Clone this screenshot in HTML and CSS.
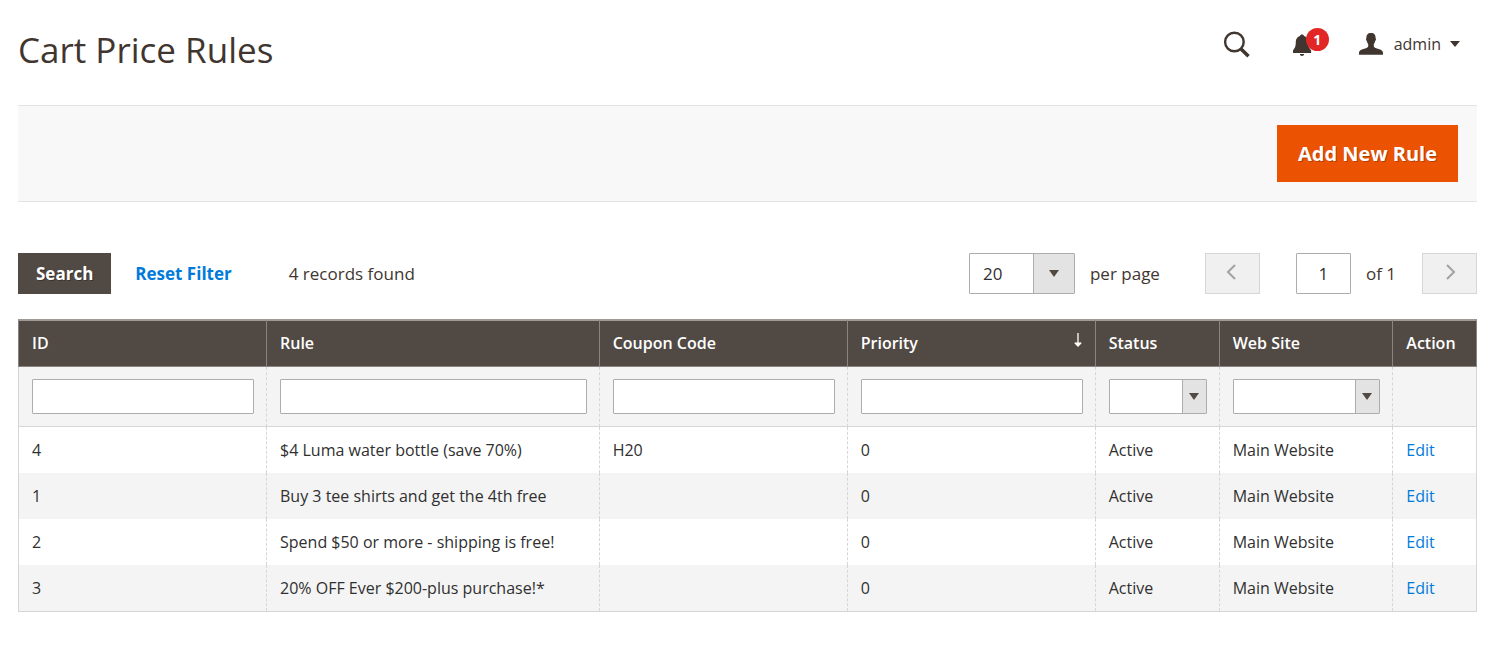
FILE: index.html
```
<!DOCTYPE html>
<html lang="en">
<head>
<meta charset="utf-8">
<meta name="viewport" content="width=device-width, initial-scale=1">
<title>Cart Price Rules</title>
<link rel="stylesheet" href="styles.css">
</head>
<body>
<header class="page-header">
  <h1 class="page-title">Cart Price Rules</h1>
  <div class="header-tools">
    <button class="icon-button" type="button" aria-label="Search">
      <svg width="28" height="28" viewBox="0 0 28 28" fill="none" stroke="currentColor"><circle cx="11.4" cy="11" r="9.3" stroke-width="2.4"/><path d="M17.5 17.5 25.5 25.2" stroke-width="3.6"/></svg>
    </button>
    <button class="icon-button notifications" type="button" aria-label="Notifications">
      <svg width="20" height="22" viewBox="0 0 20 22" fill="currentColor"><path d="M10 0.5c1.1 0 1.8.6 2 1.4 2.800.8 4.100 3 4.200 5.600.1 5 .8 6.500 2.900 8.700V19H1v-2.800c2.100-2.200 2.700-3.700 2.800-8.700.1-2.600 1.400-4.800 4.200-5.600.2-.8.9-1.400 2-1.400ZM7.800 20h4.400c-.2 1.200-1 1.900-2.200 1.900S8 21.200 7.800 20Z"/></svg>
      <span class="badge">1</span>
    </button>
    <button class="account" type="button">
      <svg width="24" height="22" viewBox="0 0 24 22" fill="currentColor"><path d="M12 0c3.400 0 4.700 2 4.600 5.200.7.300.5 2-.4 2.800-.3 1.400-.8 2.300-1.400 3v2.300c.2 1 1.200 1.500 3 2.100 3.200.9 6.200 1.600 6.200 4.600v1.200c0 .4-.2.600-.6.600H.6c-.4 0-.6-.2-.6-.6V20c0-3 3-3.700 6.200-4.600 1.800-.6 2.800-1.100 3-2.100V11c-.6-.7-1.100-1.600-1.400-3-.9-.8-1.100-2.500-.4-2.800C7.300 2 8.600 0 12 0Z"/></svg>
      <span>admin</span>
      <svg class="account-arrow" width="10" height="6" viewBox="0 0 10 6" fill="currentColor"><path d="M0 0h10L5 6Z"/></svg>
    </button>
  </div>
</header>

<main>
  <div class="page-actions">
    <button class="button-primary" type="button">Add New Rule</button>
  </div>

  <form class="grid-form">
    <div class="toolbar">
      <button class="button-search" type="button">Search</button>
      <button class="button-reset" type="button">Reset Filter</button>
      <span class="records">4 records found</span>
      <div class="per-page">
        <span class="select-box select-large">
          <select id="page-limit"><option>20</option><option>30</option><option>50</option></select>
          <svg width="10" height="7" viewBox="0 0 10 7" fill="currentColor"><path d="M0 0h10L5 7Z"/></svg>
        </span>
        <label for="page-limit">per page</label>
      </div>
      <div class="pager">
        <button class="page-button" type="button" aria-label="Previous page" disabled>
          <svg width="10" height="16" viewBox="0 0 10 16" fill="none" stroke="currentColor" stroke-width="2"><path d="M9 1 2 8l7 7"/></svg>
        </button>
        <div class="page-current">
          <input id="page-number" type="text" value="1">
          <label for="page-number">of 1</label>
        </div>
        <button class="page-button page-next" type="button" aria-label="Next page" disabled>
          <svg width="10" height="16" viewBox="0 0 10 16" fill="none" stroke="currentColor" stroke-width="2"><path d="m1 1 7 7-7 7"/></svg>
        </button>
      </div>
    </div>

    <table class="grid">
      <colgroup>
        <col class="col-wide"><col class="col-rule"><col class="col-wide"><col class="col-wide"><col class="col-status"><col class="col-site"><col>
      </colgroup>
      <thead>
        <tr class="headings">
          <th scope="col">ID</th>
          <th scope="col">Rule</th>
          <th scope="col">Coupon Code</th>
          <th scope="col"><span class="sorted">Priority <svg width="8" height="16" viewBox="0 0 8 16" fill="none" stroke="currentColor"><path d="M4 1v12" stroke-width="1.300"/><path d="M1 10.500 4 14l3-3.500Z" fill="currentColor" stroke="none"/><path d="M.8 10.800 4 14l3.200-3.200" stroke-width="1.300"/></svg></span></th>
          <th scope="col">Status</th>
          <th scope="col">Web Site</th>
          <th scope="col">Action</th>
        </tr>
        <tr class="filters">
          <td><input type="text" aria-label="ID"></td>
          <td><input type="text" aria-label="Rule"></td>
          <td><input type="text" aria-label="Coupon Code"></td>
          <td><input type="text" aria-label="Priority"></td>
          <td><span class="select-box"><select aria-label="Status"><option></option><option>Active</option><option>Inactive</option></select><svg width="10" height="7" viewBox="0 0 10 7" fill="currentColor"><path d="M0 0h10L5 7Z"/></svg></span></td>
          <td><span class="select-box"><select aria-label="Web Site"><option></option><option>Main Website</option></select><svg width="10" height="7" viewBox="0 0 10 7" fill="currentColor"><path d="M0 0h10L5 7Z"/></svg></span></td>
          <td></td>
        </tr>
      </thead>
      <tbody>
        <tr><td>4</td><td>$4 Luma water bottle (save 70%)</td><td>H20</td><td>0</td><td>Active</td><td>Main Website</td><td><a href="#">Edit</a></td></tr>
        <tr><td>1</td><td>Buy 3 tee shirts and get the 4th free</td><td></td><td>0</td><td>Active</td><td>Main Website</td><td><a href="#">Edit</a></td></tr>
        <tr><td>2</td><td>Spend $50 or more - shipping is free!</td><td></td><td>0</td><td>Active</td><td>Main Website</td><td><a href="#">Edit</a></td></tr>
        <tr><td>3</td><td>20% OFF Ever $200-plus purchase!*</td><td></td><td>0</td><td>Active</td><td>Main Website</td><td><a href="#">Edit</a></td></tr>
      </tbody>
    </table>
  </form>
</main>
</body>
</html>
```

FILE: styles.css
```
* {
  box-sizing: border-box;
}

body {
  margin: 0;
  padding: 24px 16px 36px 18px;
  background: #fff;
  color: #41362f;
  font-family: "Open Sans", "Noto Sans", sans-serif;
  font-size: 17px;
  line-height: 24px;
}

button,
input,
select {
  margin: 0;
  font: inherit;
  color: inherit;
}

button {
  padding: 0;
  border: 0;
  background: none;
  cursor: pointer;
}

svg {
  display: block;
  flex: none;
}

.page-header {
  display: flex;
  justify-content: space-between;
  align-items: flex-start;
  height: 81px;
}

.page-title {
  margin: 0;
  font-size: 35px;
  line-height: 52px;
  font-weight: 400;
}

.header-tools {
  display: flex;
  align-items: center;
  height: 40px;
  padding-right: 17px;
}

.icon-button {
  padding-top: 1px;
}

.notifications {
  position: relative;
  margin: 0 47px 0 41px;
}

.badge {
  position: absolute;
  left: 14px;
  top: -5px;
  width: 23px;
  height: 23px;
  border-radius: 50%;
  background: #e22626;
  color: #fff;
  font-size: 14px;
  font-weight: 700;
  line-height: 23px;
  text-align: center;
}

.account {
  display: flex;
  align-items: center;
  gap: 11px;
  font-size: 16px;
}

.account-arrow {
  margin-left: -2px;
}

.page-actions {
  display: flex;
  justify-content: flex-end;
  padding: 19px 19px;
  border: solid #e3e3e3;
  border-width: 1px 0;
  background: #f8f8f8;
}

.button-primary {
  height: 57px;
  padding: 0 21px;
  background: #eb5202;
  color: #fff;
  font-size: 20px;
  font-weight: 700;
  text-shadow: 1px 1px 0 rgba(0, 0, 0, 0.25);
}

.toolbar {
  display: flex;
  align-items: center;
  padding: 51px 0 25px;
}

.button-search {
  height: 41px;
  padding: 0 18px;
  background: #514943;
  color: #fff;
  font-weight: 700;
  text-shadow: 1px 1px 0 rgba(0, 0, 0, 0.3);
}

.button-reset {
  margin: 0 57px 0 24px;
  color: #007bdb;
  font-weight: 700;
}

.per-page {
  display: flex;
  align-items: center;
  gap: 15px;
  margin-left: auto;
}

.pager {
  display: flex;
  gap: 36px;
  margin-left: 45px;
}

.page-current {
  display: flex;
  align-items: center;
  gap: 15px;
  margin-right: -10px;
}

.page-current input {
  width: 55px;
  height: 41px;
  padding: 0;
  border: 1px solid #adadad;
  border-radius: 1px;
  color: #303030;
  text-align: center;
}

.page-button {
  display: flex;
  justify-content: center;
  padding: 10px 3px 0 0;
  width: 55px;
  height: 41px;
  border: 1px solid #d6d6d6;
  background: #f0f0f0;
  color: #a5a19e;
}

.page-next {
  padding: 10px 0 0 3px;
}

.select-box {
  position: relative;
  display: block;
  color: #514943;
}

.select-box select {
  display: block;
  width: 100%;
  height: 35px;
  padding: 0 32px 0 8px;
  border: 1px solid #adadad;
  border-radius: 1px;
  appearance: none;
  background: linear-gradient(to right, #adadad 1px, #e3e3e3 1px) right / 24px 100% no-repeat #fff;
  color: #303030;
}

.select-box svg {
  position: absolute;
  right: 8px;
  top: 14px;
  pointer-events: none;
}

.select-large select {
  width: 106px;
  height: 41px;
  padding: 0 41px 0 13px;
  background-size: 41px 100%;
}

.select-large svg {
  right: 16px;
  top: 17px;
}

.grid {
  width: 100%;
  table-layout: fixed;
  border-collapse: separate;
  border-spacing: 0;
  border-bottom: 1px solid #d6d6d6;
  color: #303030;
  font-size: 16px;
  line-height: 22px;
}

.col-wide {
  width: 17%;
}

.col-rule {
  width: 22.8%;
}

.col-status {
  width: 8.5%;
}

.col-site {
  width: 11.9%;
}

.grid th,
.grid td {
  padding: 12px 12px 12px 13px;
  border-left: 1px dashed #d6d6d6;
  text-align: left;
  white-space: nowrap;
}

.grid .headings th {
  height: 48px;
  padding: 11px 13px 12px;
  border: solid #8a837f;
  border-width: 2px 0 1px 1px;
  border-top-color: #a09a96;
  background: #514943;
  color: #fff;
  font-weight: 600;
}

.grid td:first-child {
  border-left-style: solid;
}

.grid td:last-child {
  border-right: 1px solid #d6d6d6;
}

.grid .headings th:last-child {
  border-right-width: 1px;
}

.sorted {
  display: flex;
  justify-content: space-between;
}

.grid .filters td {
  border-bottom: 1px solid #d6d6d6;
  background: #f4f4f4;
}

.filters input {
  display: block;
  width: 100%;
  height: 35px;
  padding: 0 8px;
  border: 1px solid #adadad;
  border-radius: 1px;
  background: #fff;
}

.grid tbody tr:nth-child(even) {
  background: #f4f4f4;
}

.grid a {
  color: #007bdb;
  text-decoration: none;
}
```
